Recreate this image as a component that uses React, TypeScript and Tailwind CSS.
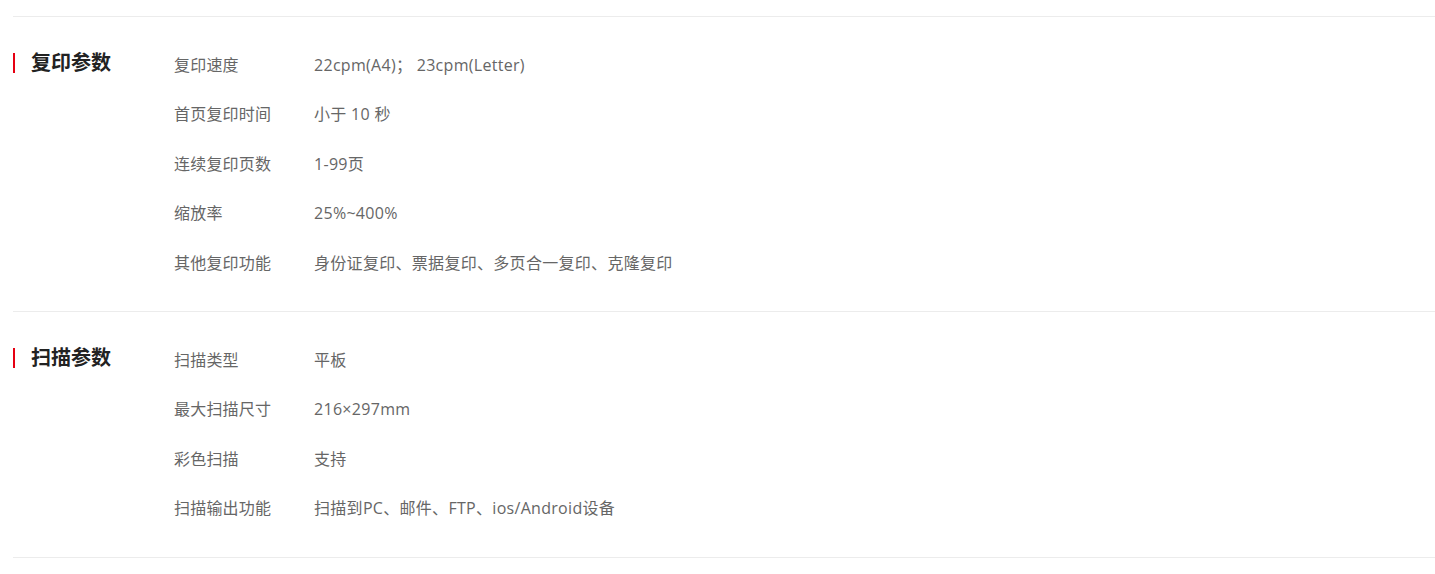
import React from "react";

const sections = [
  {
    title: "复印参数",
    rows: [
      ["复印速度", "22cpm(A4)； 23cpm(Letter)"],
      ["首页复印时间", "小于 10 秒"],
      ["连续复印页数", "1-99页"],
      ["缩放率", "25%~400%"],
      ["其他复印功能", "身份证复印、票据复印、多页合一复印、克隆复印"],
    ],
  },
  {
    title: "扫描参数",
    rows: [
      ["扫描类型", "平板"],
      ["最大扫描尺寸", "216×297mm"],
      ["彩色扫描", "支持"],
      ["扫描输出功能", "扫描到PC、邮件、FTP、ios/Android设备"],
    ],
  },
];

export default function App() {
  return (
    <div className="w-[1435px] h-[574px] bg-white pt-4 pl-[13px] font-['Open_Sans','Noto_Sans_CJK_SC',sans-serif]">
      {sections.map((s) => (
        <div key={s.title} className="flex border-t border-[#ececec] pt-[23px] pb-[23.5px]">
          <div className="w-[161px] shrink-0 pt-[13px]">
            <div className="flex items-center h-[20px]">
              <div className="w-[2px] h-[20px] bg-[#e60012]" />
              <div className="ml-4 text-[20px] leading-[20px] font-bold text-[#222]">{s.title}</div>
            </div>
          </div>
          <div className="flex flex-col">
            {s.rows.map(([k, v]) => (
              <div key={k} className="flex items-center h-[49.5px] text-[16px] text-[#666] tracking-[0.2px]">
                <div className="w-[140px] shrink-0">{k}</div>
                <div className="tracking-[0.3px]">{v}</div>
              </div>
            ))}
          </div>
        </div>
      ))}
      <div className="border-t border-[#ececec]" />
    </div>
  );
}
